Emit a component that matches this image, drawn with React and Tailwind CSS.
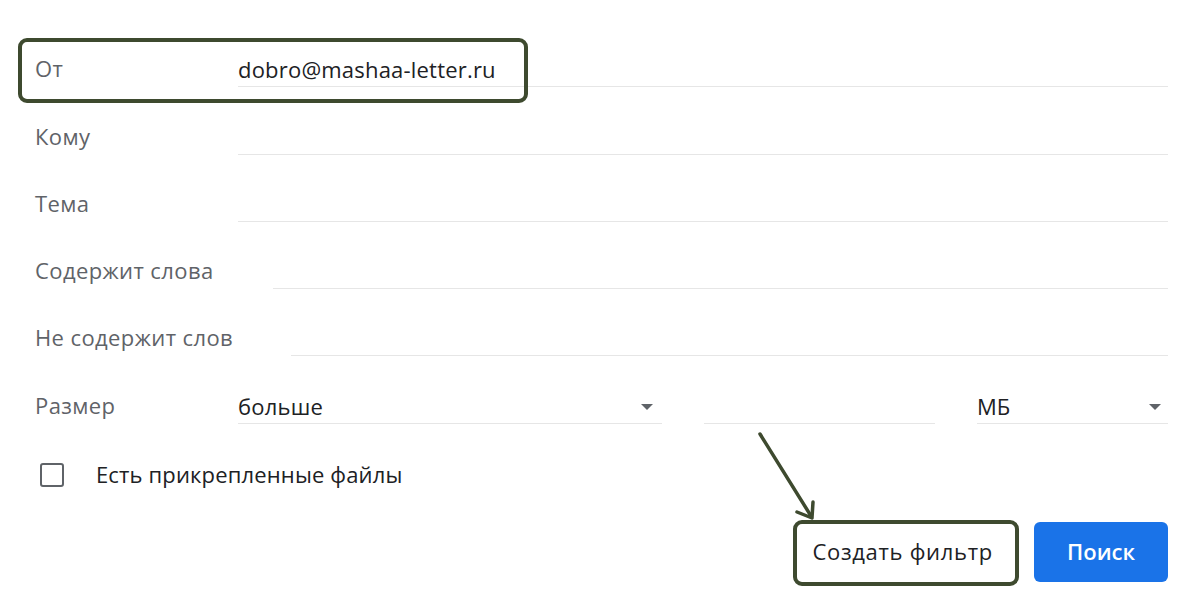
import React from "react";

function Caret() {
  return (
    <svg width="12" height="6" viewBox="0 0 12 6" className="shrink-0">
      <path d="M0 0 L12 0 L6 6 Z" fill="#5f6368" />
    </svg>
  );
}

function Row({ label, labelW, value }) {
  return (
    <div className="flex items-end h-[67.3px]">
      <div className="text-[22px] tracking-[0.4px] leading-[28px] pb-[5px] text-[#5f6368] shrink-0" style={{ width: labelW }}>
        {label}
      </div>
      <div className="flex-1 h-[32px] border-b border-[#e6e6e6] text-[22px] tracking-[0.2px] leading-[28px] text-[#202124]">
        {value}
      </div>
    </div>
  );
}

export default function App() {
  return (
    <div className="relative w-[1200px] h-[604px] bg-white overflow-hidden" style={{ fontFamily: "'Open Sans', Roboto, sans-serif" }}>
      <div className="pl-[35px] pr-[32px] pt-[20px]">
        <Row label="От" labelW={203} value="dobro@mashaa-letter.ru" />
        <Row label="Кому" labelW={203} />
        <Row label="Тема" labelW={203} />
        <Row label="Содержит слова" labelW={238} />
        <Row label="Не содержит слов" labelW={256} />
        <div className="flex items-end h-[67.3px]">
          <div className="w-[203px] text-[22px] tracking-[0.4px] leading-[28px] pb-[5px] text-[#5f6368] shrink-0">Размер</div>
          <div className="w-[424px] h-[32px] border-b border-[#e6e6e6] flex items-start justify-between pr-[9px] text-[22px] tracking-[0.2px] leading-[28px] text-[#202124]">
            <span>больше</span>
            <span className="pt-[12px]"><Caret /></span>
          </div>
          <div className="w-[42px]" />
          <div className="w-[231px] h-[32px] border-b border-[#e6e6e6]" />
          <div className="w-[42px]" />
          <div className="flex-1 h-[32px] border-b border-[#e6e6e6] flex items-start justify-between pr-[7px] text-[22px] leading-[28px] text-[#202124]">
            <span>МБ</span>
            <span className="pt-[12px]"><Caret /></span>
          </div>
        </div>
        <div className="flex items-center mt-[38px] pl-[5px]">
          <div className="w-[24px] h-[24px] border-2 border-[#5f6368] rounded-[3px]" />
          <span className="ml-[32px] text-[22px] tracking-[0.15px] leading-[28px] text-[#202124] -mt-[2px]">Есть прикрепленные файлы</span>
        </div>
        <div className="flex justify-end items-center mt-[34px] gap-[17px]">
          <button className="h-[60px] px-[24px] text-[22px] tracking-[0.7px] text-[#202124] bg-white">Создать фильтр</button>
          <button className="h-[60px] w-[134px] rounded-[6px] bg-[#1a73e8] text-white text-[22px] font-semibold">Поиск</button>
        </div>
      </div>

      {/* annotations */}
      <div className="absolute left-[18px] top-[38px] w-[510px] h-[65px] border-[4px] border-[#3e4a2f] rounded-[9px]" />
      <div className="absolute left-[793px] top-[520px] w-[226px] h-[66px] border-[4px] border-[#3e4a2f] rounded-[9px]" />
      <svg className="absolute left-0 top-0" width="1200" height="604" viewBox="0 0 1200 604">
        <line x1="760" y1="434" x2="811" y2="516" stroke="#3e4a2f" strokeWidth="3.5" strokeLinecap="round" />
        <path d="M797 512 L812 518 L813 502" fill="none" stroke="#3e4a2f" strokeWidth="3.5" strokeLinecap="round" strokeLinejoin="round" />
      </svg>
    </div>
  );
}
